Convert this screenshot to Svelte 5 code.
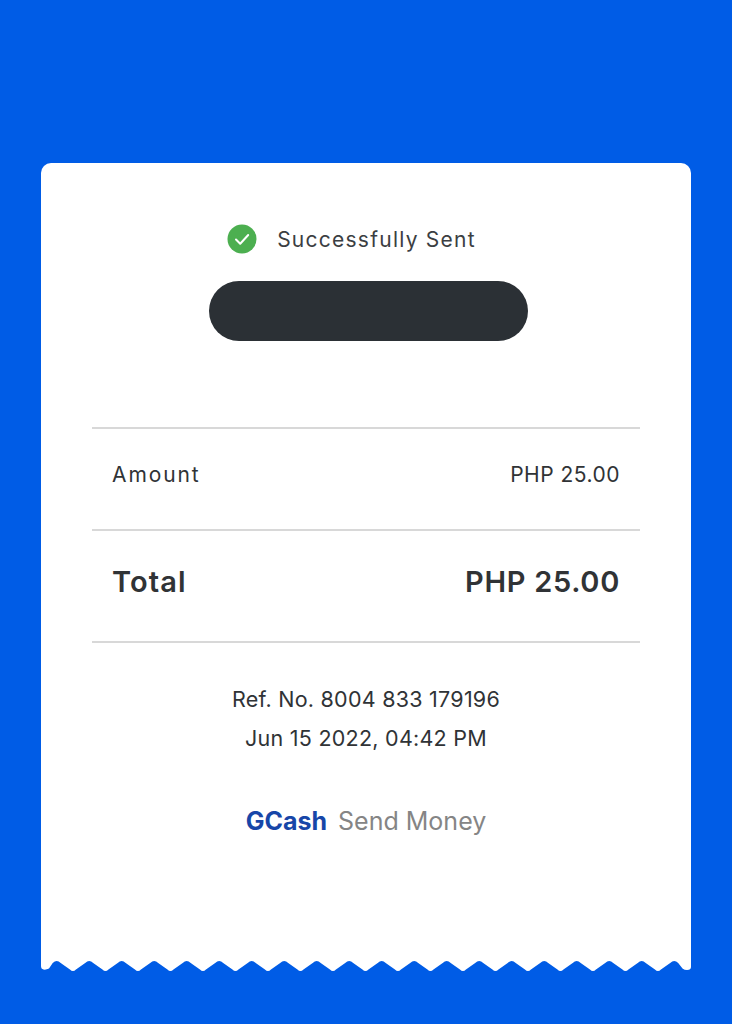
<script>
	// bottom edge of the receipt: 20 teeth, 32.5px apart, drawn right to left
	const toothWidth = 32.5;
	const firstPeak = 15.7;

	let edge = 'M0 0 H650 V8 Q650 11 646 11 Q643.5 11 641.5 9.5';
	for (let i = 19; i >= 0; i--) {
		const peak = firstPeak + toothWidth * i;
		const valley = peak - toothWidth / 2;
		edge += ` L${peak + 4} 4 Q${peak} 0 ${peak - 4} 4`;
		if (i > 0) edge += ` L${valley + 3} 10.5 Q${valley} 13.5 ${valley - 3} 10.5`;
	}
	edge += ' L8 9.5 Q5 11 2.5 10.5 Q0 10 0 7 Z';
</script>

<main class="page">
	<section class="receipt">
		<div class="status">
			<svg class="check" width="30" height="30" viewBox="0 0 30 30" aria-hidden="true">
				<circle cx="15" cy="15" r="14.5" fill="#4caf50" />
				<path d="M9 15.5l4.2 4.2L21.2 11" fill="none" stroke="#fff" stroke-width="2" stroke-linecap="round" stroke-linejoin="round" />
			</svg>
			<span>Successfully Sent</span>
		</div>
		<div class="redacted"></div>

		<div class="rows">
			<div class="row amount">
				<span class="label">Amount</span>
				<span class="value">PHP 25.00</span>
			</div>
			<div class="row total">
				<span class="label">Total</span>
				<span>PHP 25.00</span>
			</div>
		</div>

		<div class="meta">
			<p>Ref. No. 8004 833 179196</p>
			<p>Jun 15 2022, 04:42 PM</p>
		</div>

		<div class="brand">
			<strong>GCash</strong>
			<span>Send Money</span>
		</div>
	</section>
	<svg class="edge" width="650" height="14" viewBox="0 0 650 14" aria-hidden="true">
		<path d={edge} fill="#fff" />
	</svg>
</main>

<style>
	:global(body) {
		margin: 0;
		background: #005ce6;
	}

	.page {
		display: flex;
		flex-direction: column;
		height: 1024px;
		box-sizing: border-box;
		padding: 163px 41px 0;
		font-family: 'Inter', 'Liberation Sans', sans-serif;
		color: #303336;
	}

	.receipt {
		display: flex;
		flex-direction: column;
		align-items: center;
		height: 797px;
		box-sizing: border-box;
		padding-top: 61px;
		background: #fff;
		border-radius: 10px 10px 0 0;
	}

	.status {
		display: flex;
		align-items: center;
		gap: 20px;
		height: 30px;
		margin-right: 29px;
		font-size: 21px;
		letter-spacing: 1.25px;
		color: #3b3e42;
	}

	.edge {
		display: block;
		margin-top: -1px;
	}

	.redacted {
		width: 319px;
		height: 60px;
		margin-top: 27px;
		margin-left: 4px;
		background: #2b3035;
		border-radius: 30px;
	}

	.rows {
		width: 548px;
		margin-top: 86px;
		border-top: 2px solid #d8d8d8;
	}

	.row {
		display: flex;
		justify-content: space-between;
		align-items: center;
		box-sizing: border-box;
		padding: 0 20px 10px;
		border-bottom: 2px solid #d8d8d8;
	}

	.amount {
		height: 102px;
		font-size: 21px;
		letter-spacing: 0.5px;
	}

	.amount .label {
		letter-spacing: 1.9px;
	}

	.total {
		height: 112px;
		font-size: 29px;
		font-weight: 600;
		letter-spacing: 0.7px;
	}

	.total .label {
		letter-spacing: 1.1px;
	}

	.meta {
		margin-top: 37px;
		text-align: center;
		font-size: 21.5px;
		letter-spacing: 0.25px;
		line-height: 39px;
	}

	.meta p {
		margin: 0;
	}

	.brand {
		display: flex;
		align-items: baseline;
		gap: 11px;
		margin-top: 48px;
		font-size: 25px;
	}

	.brand strong {
		color: #1746a8;
		font-weight: 700;
	}

	.brand span {
		color: #858585;
	}
</style>
